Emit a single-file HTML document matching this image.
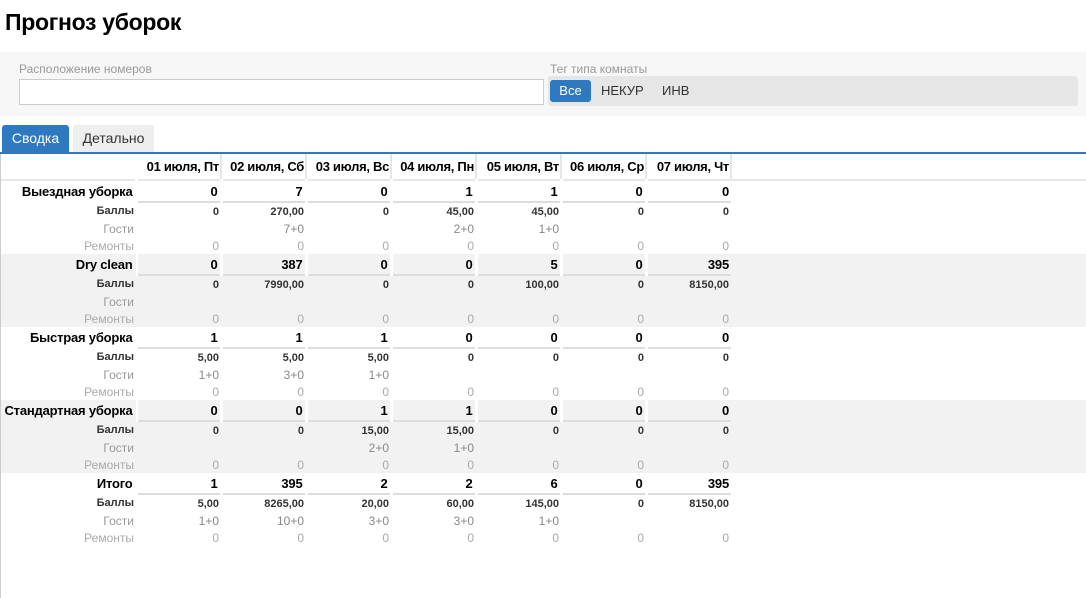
<!DOCTYPE html>
<html><head><meta charset="utf-8"><style>
body{margin:0;width:1086px;height:598px;overflow:hidden;font-family:"Liberation Sans","DejaVu Sans",sans-serif;background:#fff;color:#000;position:relative}
h1{position:absolute;left:5px;top:9px;margin:0;font-size:23px;font-weight:bold;letter-spacing:-0.3px}
.filt{position:absolute;left:0;top:52px;width:1086px;height:64px;background:#f7f7f7}
.lbl{position:absolute;font-size:12px;color:#999}
.inp{position:absolute;left:19px;top:79px;width:523px;height:24px;border:1px solid #ccc;background:#fff}
.seg{position:absolute;left:548px;top:76px;width:530px;height:30px;background:#e6e6e6;border-radius:3px}
.seg span{position:absolute;top:4px;height:22px;line-height:22px;font-size:13px;color:#333}
.seg .on{left:2px;width:41px;background:#2e79c0;color:#fff;border-radius:3px;text-align:center}
.tab{position:absolute;top:125px;height:27px;line-height:27px;font-size:14px;border-radius:3px 3px 0 0;text-align:center}
.t1{left:2px;width:67px;background:#2e79c0;color:#fff}
.t2{left:73px;width:81px;background:#eee;color:#333}
.line{position:absolute;left:0;top:152px;width:1086px;height:2px;background:#2e79c0}
.vl{position:absolute;left:0;top:154px;width:1px;height:444px;background:#ccc}
table{position:absolute;left:1px;top:154px;border-collapse:collapse;table-layout:fixed;width:1085px}
td{padding:0 2px 0 0;text-align:right;white-space:nowrap}
td.d,tr td:not(:first-child){overflow:hidden}
col.l{width:135px}col.d{width:85px}
tr.h td{height:25px;font-size:13px;font-weight:bold;letter-spacing:-0.3px;border-bottom:2px solid #e6e6e6}
tr.h td.d{border-right:2px solid #e6e6e6;padding-right:1px}
tr.m td{height:20px;font-size:13px;font-weight:bold;color:#000;letter-spacing:-0.2px}
tr.m td.d{border-bottom:2px solid #ddd;border-left:3px solid transparent;background-clip:padding-box}
tr.b td{height:17px;font-size:11px;font-weight:bold;color:#333}
tr.g td{height:17px;font-size:12px;color:#999}
tr.r td{height:17px;font-size:12px;color:#aaa}
tr.g td.d{color:#888}
.s td{background:#f2f2f2}
</style></head><body>
<h1>Прогноз уборок</h1>
<div class="filt"></div>
<div class="lbl" style="left:19px;top:62px">Расположение номеров</div>
<div class="inp"></div>
<div class="lbl" style="left:550px;top:62px">Тег типа комнаты</div>
<div class="seg"><span class="on">Все</span><span style="left:53px">НЕКУР</span><span style="left:114px">ИНВ</span></div>
<div class="tab t1">Сводка</div><div class="tab t2">Детально</div>
<div class="line"></div><div class="vl"></div>
<table>
<colgroup><col class="l"><col class="d"><col class="d"><col class="d"><col class="d"><col class="d"><col class="d"><col class="d"><col></colgroup>
<tr class="h"><td></td><td class="d">01 июля, Пт</td><td class="d">02 июля, Сб</td><td class="d">03 июля, Вс</td><td class="d">04 июля, Пн</td><td class="d">05 июля, Вт</td><td class="d">06 июля, Ср</td><td class="d">07 июля, Чт</td><td></td></tr>

<tr class="m"><td>Выездная уборка</td><td class="d">0</td><td class="d">7</td><td class="d">0</td><td class="d">1</td><td class="d">1</td><td class="d">0</td><td class="d">0</td><td></td></tr>
<tr class="b"><td>Баллы</td><td>0</td><td>270,00</td><td>0</td><td>45,00</td><td>45,00</td><td>0</td><td>0</td><td></td></tr>
<tr class="g"><td>Гости</td><td class="d"></td><td class="d">7+0</td><td class="d"></td><td class="d">2+0</td><td class="d">1+0</td><td class="d"></td><td class="d"></td><td></td></tr>
<tr class="r"><td>Ремонты</td><td>0</td><td>0</td><td>0</td><td>0</td><td>0</td><td>0</td><td>0</td><td></td></tr>

<tr class="m s"><td>Dry clean</td><td class="d">0</td><td class="d">387</td><td class="d">0</td><td class="d">0</td><td class="d">5</td><td class="d">0</td><td class="d">395</td><td></td></tr>
<tr class="b s"><td>Баллы</td><td>0</td><td>7990,00</td><td>0</td><td>0</td><td>100,00</td><td>0</td><td>8150,00</td><td></td></tr>
<tr class="g s"><td>Гости</td><td class="d"></td><td class="d"></td><td class="d"></td><td class="d"></td><td class="d"></td><td class="d"></td><td class="d"></td><td></td></tr>
<tr class="r s"><td>Ремонты</td><td>0</td><td>0</td><td>0</td><td>0</td><td>0</td><td>0</td><td>0</td><td></td></tr>

<tr class="m"><td>Быстрая уборка</td><td class="d">1</td><td class="d">1</td><td class="d">1</td><td class="d">0</td><td class="d">0</td><td class="d">0</td><td class="d">0</td><td></td></tr>
<tr class="b"><td>Баллы</td><td>5,00</td><td>5,00</td><td>5,00</td><td>0</td><td>0</td><td>0</td><td>0</td><td></td></tr>
<tr class="g"><td>Гости</td><td class="d">1+0</td><td class="d">3+0</td><td class="d">1+0</td><td class="d"></td><td class="d"></td><td class="d"></td><td class="d"></td><td></td></tr>
<tr class="r"><td>Ремонты</td><td>0</td><td>0</td><td>0</td><td>0</td><td>0</td><td>0</td><td>0</td><td></td></tr>

<tr class="m s"><td>Стандартная уборка</td><td class="d">0</td><td class="d">0</td><td class="d">1</td><td class="d">1</td><td class="d">0</td><td class="d">0</td><td class="d">0</td><td></td></tr>
<tr class="b s"><td>Баллы</td><td>0</td><td>0</td><td>15,00</td><td>15,00</td><td>0</td><td>0</td><td>0</td><td></td></tr>
<tr class="g s"><td>Гости</td><td class="d"></td><td class="d"></td><td class="d">2+0</td><td class="d">1+0</td><td class="d"></td><td class="d"></td><td class="d"></td><td></td></tr>
<tr class="r s"><td>Ремонты</td><td>0</td><td>0</td><td>0</td><td>0</td><td>0</td><td>0</td><td>0</td><td></td></tr>

<tr class="m"><td>Итого</td><td class="d">1</td><td class="d">395</td><td class="d">2</td><td class="d">2</td><td class="d">6</td><td class="d">0</td><td class="d">395</td><td></td></tr>
<tr class="b"><td>Баллы</td><td>5,00</td><td>8265,00</td><td>20,00</td><td>60,00</td><td>145,00</td><td>0</td><td>8150,00</td><td></td></tr>
<tr class="g"><td>Гости</td><td class="d">1+0</td><td class="d">10+0</td><td class="d">3+0</td><td class="d">3+0</td><td class="d">1+0</td><td class="d"></td><td class="d"></td><td></td></tr>
<tr class="r"><td>Ремонты</td><td>0</td><td>0</td><td>0</td><td>0</td><td>0</td><td>0</td><td>0</td><td></td></tr>
</table>
</body></html>
